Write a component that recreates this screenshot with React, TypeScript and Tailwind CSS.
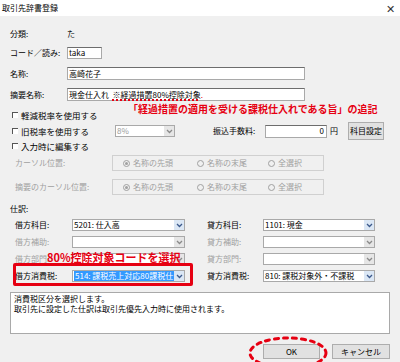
import React from "react";

function Chevron({ color }: { color: string }) {
  return (
    <svg width="7" height="5" viewBox="0 0 7 5">
      <path d="M1 1 L3.5 3.5 L6 1" fill="none" stroke={color} strokeWidth="1.3" />
    </svg>
  );
}

function Combo({
  value,
  width,
  disabled,
  selected,
}: {
  value?: string;
  width: string;
  disabled?: boolean;
  selected?: boolean;
}) {
  return (
    <div className={`flex h-[12px] ${width} border border-[#a9a9a9] bg-white`}>
      <div className="flex flex-1 items-center overflow-hidden whitespace-nowrap pl-[1px]">
        {value && (
          <span
            className={
              selected
                ? "flex h-full flex-1 items-center bg-[#3399ff] pl-[1px] text-white"
                : disabled
                  ? "text-[#9a9a9a]"
                  : "text-black"
            }
          >
            {value}
          </span>
        )}
      </div>
      <div
        className={`flex w-[10px] items-center justify-center ${
          disabled ? "bg-[#e6e6e6]" : "bg-[#dbe7f5]"
        }`}
      >
        <Chevron color={disabled ? "#8a8a8a" : "#3d5a8c"} />
      </div>
    </div>
  );
}

function Check({ label }: { label: string }) {
  return (
    <div className="flex items-center">
      <div className="ml-[2px] h-[6px] w-[6px] border-l border-t border-[#555] bg-white" />
      <span className="ml-[3px] text-[8.5px]">{label}</span>
    </div>
  );
}

function Radio({ label, on, width }: { label: string; on?: boolean; width: string }) {
  return (
    <div className={`flex items-center ${width}`}>
      <div className="flex h-[7px] w-[7px] items-center justify-center rounded-full border border-[#a0a0a0]">
        {on && <div className="h-[3px] w-[3px] rounded-full bg-[#a0a0a0]" />}
      </div>
      <span className="ml-[3px] text-[#a0a0a0]">{label}</span>
    </div>
  );
}

function CursorRow({ label }: { label: string }) {
  return (
    <div className="flex h-[16px] items-center">
      <span className="w-[102px] pl-[5px] text-[#a0a0a0]">{label}</span>
      <div className="flex h-full w-[212px] items-center border border-[#d0d0d0] pl-[10px]">
        <Radio label="名称の先頭" on width="w-[74px]" />
        <Radio label="名称の末尾" width="w-[71px]" />
        <Radio label="全選択" width="w-[50px]" />
      </div>
    </div>
  );
}

function JournalRow({
  left,
  right,
  lv,
  rv,
  disabled,
  selected,
}: {
  left: string;
  right: string;
  lv?: string;
  rv?: string;
  disabled?: boolean;
  selected?: boolean;
}) {
  const lc = disabled ? "text-[#a0a0a0]" : "text-black";
  return (
    <div className="flex h-[12px] items-center">
      <span className={`w-[62px] pl-[5px] ${lc}`}>{left}</span>
      <Combo value={lv} width="w-[113px]" disabled={disabled} selected={selected} />
      <span className={`ml-[22px] w-[56px] ${lc}`}>{right}</span>
      <Combo value={rv} width="w-[112px]" disabled={disabled} />
    </div>
  );
}

export default function App() {
  return (
    <div className="relative h-[362px] w-[400px] overflow-hidden bg-[#f0f0f0] font-['Noto_Sans_CJK_JP',sans-serif] text-[8px] leading-none text-black">
      <div className="flex h-[16px] items-center justify-between bg-white pl-[2px] pr-[5px]">
        <span className="text-[8px]">取引先辞書登録</span>
        <span className="text-[11px] font-light text-[#333]">✕</span>
      </div>

      <div className="flex flex-col pl-[10px]">
        <div className="mt-[12px] flex h-[12px] items-center">
          <span className="w-[57px]">分類:</span>
          <span>た</span>
        </div>
        <div className="mt-[7px] flex h-[12px] items-center">
          <span className="w-[57px]">コード／読み:</span>
          <div className="flex h-full w-[35px] items-center border border-[#a9a9a9] border-t-[#6d6d6d] bg-white pl-[1px]">
            taka
          </div>
        </div>
        <div className="mt-[8px] flex h-[13px] items-center">
          <span className="w-[57px]">名称:</span>
          <div className="flex h-full w-[238px] items-center border border-[#a9a9a9] border-t-[#6d6d6d] bg-white pl-[1px]">
            高崎花子
          </div>
        </div>
        <div className="mt-[8px] flex h-[13px] items-center">
          <span className="w-[57px]">摘要名称:</span>
          <div className="flex h-full w-[238px] items-center whitespace-pre border border-[#a9a9a9] border-t-[#6d6d6d] bg-white pl-[1px]">
            現金仕入れ{"  "}
            <span className="underline decoration-[#e60012] decoration-dotted decoration-2 underline-offset-2">
              ※経過措置80%控除対象
            </span>
            <span className="text-[#e60012]">.</span>
          </div>
        </div>

        <div className="mt-[8px] flex h-[12px] items-center">
          <Check label="軽減税率を使用する" />
        </div>
        <div className="mt-[1px] flex h-[18px] items-center">
          <div className="w-[105px]">
            <Check label="旧税率を使用する" />
          </div>
          <Combo value="8%" width="w-[60px]" disabled />
          <span className="ml-[38px] w-[52px]">振込手数料:</span>
          <div className="flex h-[13px] w-[62px] items-center justify-end border border-[#a9a9a9] border-t-[#6d6d6d] bg-white pr-[2px]">
            0
          </div>
          <span className="ml-[3px]">円</span>
          <div className="ml-[10px] flex h-[18px] w-[36px] items-center justify-center border border-[#adadad] bg-[#e1e1e1]">
            科目設定
          </div>
        </div>
        <div className="flex h-[12px] items-center">
          <Check label="入力時に編集する" />
        </div>

        <div className="mt-[3px]">
          <CursorRow label="カーソル位置:" />
        </div>
        <div className="mt-[8px]">
          <CursorRow label="摘要のカーソル位置:" />
        </div>

        <div className="mt-[8px] flex h-[12px] items-center">仕訳:</div>

        <div className="mt-[4px] flex flex-col gap-[5px]">
          <JournalRow left="借方科目:" right="貸方科目:" lv="5201: 仕入高" rv="1101: 現金" />
          <JournalRow left="借方補助:" right="貸方補助:" disabled />
          <JournalRow left="借方部門:" right="貸方部門:" disabled />
          <JournalRow
            left="借方消費税:"
            right="貸方消費税:"
            lv="514: 課税売上対応80課税仕"
            rv="810: 課税対象外・不課税"
            selected
          />
        </div>

        <div className="mt-[10px] flex h-[42px] w-[380px] flex-col gap-[2px] border border-[#a9a9a9] bg-white px-[3px] pt-[2px]">
          <span>消費税区分を選択します。</span>
          <span>取引先に設定した仕訳は取引先優先入力時に使用されます。</span>
        </div>

        <div className="mt-[10px] flex w-[380px] justify-end gap-[12px]">
          <div className="flex h-[15px] w-[57px] items-center justify-center border border-[#adadad] bg-[#e1e1e1]">
            OK
          </div>
          <div className="flex h-[15px] w-[58px] items-center justify-center border border-[#adadad] bg-[#e1e1e1]">
            キャンセル
          </div>
        </div>
      </div>

      {/* annotations */}
      <div className="absolute left-[128px] top-[103px] whitespace-nowrap text-[10px] font-bold leading-[12px] text-[#e60012]">
        「経過措置の適用を受ける課税仕入れである旨」の追記
      </div>
      <div className="absolute left-[47px] top-[251px] whitespace-nowrap text-[11px] font-bold leading-[13px] text-[#e60012]">
        80%控除対象コードを選択
      </div>
      <div className="absolute left-[13px] top-[263px] h-[23px] w-[180px] rounded-[2px] border-[3px] border-[#e60012]" />
      <svg className="absolute left-[247px] top-[335px]" width="82" height="36" viewBox="0 0 82 36">
        <ellipse
          cx="41"
          cy="18"
          rx="38"
          ry="15"
          fill="none"
          stroke="#e60012"
          strokeWidth="3"
          strokeDasharray="4 5"
          strokeLinecap="round"
        />
      </svg>
    </div>
  );
}
